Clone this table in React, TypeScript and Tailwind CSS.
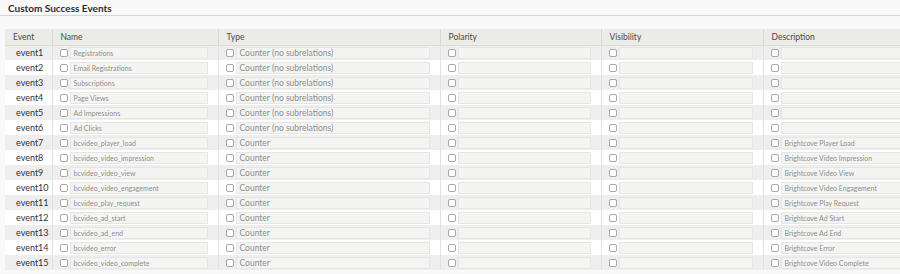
import React from 'react'

interface EventRow {
	id: string
	name: string
	type: string
	description: string
}

const rows: EventRow[] = [
	{ id: 'event1', name: 'Registrations', type: 'Counter (no subrelations)', description: '' },
	{ id: 'event2', name: 'Email Registrations', type: 'Counter (no subrelations)', description: '' },
	{ id: 'event3', name: 'Subscriptions', type: 'Counter (no subrelations)', description: '' },
	{ id: 'event4', name: 'Page Views', type: 'Counter (no subrelations)', description: '' },
	{ id: 'event5', name: 'Ad Impressions', type: 'Counter (no subrelations)', description: '' },
	{ id: 'event6', name: 'Ad Clicks', type: 'Counter (no subrelations)', description: '' },
	{ id: 'event7', name: 'bcvideo_player_load', type: 'Counter', description: 'Brightcove Player Load' },
	{ id: 'event8', name: 'bcvideo_video_impression', type: 'Counter', description: 'Brightcove Video Impression' },
	{ id: 'event9', name: 'bcvideo_video_view', type: 'Counter', description: 'Brightcove Video View' },
	{ id: 'event10', name: 'bcvideo_video_engagement', type: 'Counter', description: 'Brightcove Video Engagement' },
	{ id: 'event11', name: 'bcvideo_play_request', type: 'Counter', description: 'Brightcove Play Request' },
	{ id: 'event12', name: 'bcvideo_ad_start', type: 'Counter', description: 'Brightcove Ad Start' },
	{ id: 'event13', name: 'bcvideo_ad_end', type: 'Counter', description: 'Brightcove Ad End' },
	{ id: 'event14', name: 'bcvideo_error', type: 'Counter', description: 'Brightcove Error' },
	{ id: 'event15', name: 'bcvideo_video_complete', type: 'Counter', description: 'Brightcove Video Complete' },
]

const Box = () => (
	<span className="w-[8px] h-[8px] shrink-0 rounded-[2px] border border-[#a8a8a8] bg-white" />
)

interface FieldProps {
	text?: string
	big?: boolean
	last?: boolean
}

const Field = ({ text = '', big = false, last = false }: FieldProps) => (
	<div className={`flex items-center h-full pl-[7px] ${last ? 'pr-0' : 'pr-[10px]'}`}>
		<Box />
		<div
			className={`ml-[2px] flex-1 h-[12px] flex items-center px-[3px] pt-[1px] leading-none bg-[#f4f4f2] border border-[#e6e6e4] text-[#8e8e8e] whitespace-nowrap overflow-hidden ${
				big ? 'text-[8.5px]' : 'text-[7px]'
			}`}
		>
			{text}
		</div>
	</div>
)

const headers = ['Event', 'Name', 'Type', 'Polarity', 'Visibility', 'Description']
const widths = ['w-[47px]', 'w-[166px]', 'w-[222px]', 'w-[161px]', 'w-[162px]', 'w-[142px]']

const App = () => {
	return (
		<div className="w-[900px] h-[274px] overflow-hidden bg-[#f9f9f9] font-['Lato',sans-serif] text-[#333]">
			<div className="px-[8px] pt-[2px] h-[16px] border-b border-[#d6d6d6]">
				<h2 className="text-[10px] font-bold leading-[12px] text-[#2c2c2c]">Custom Success Events</h2>
			</div>
			<table className="ml-[5px] mt-[13px] border-collapse table-fixed w-[900px]">
				<colgroup>
					{widths.map((w, i) => (
						<col key={i} className={w} />
					))}
				</colgroup>
				<thead>
					<tr className="h-[16px] bg-[#ebebe7]">
						{headers.map((h, i) => (
							<th
								key={h}
								className={`text-left font-normal text-[8.5px] text-[#4a4a4a] leading-none pt-[1px] pl-[8px] pr-0 border-b border-[#dcdcd8] ${
									i > 0 ? 'border-l border-l-[#d8d8d4]' : ''
								}`}
							>
								{h}
							</th>
						))}
					</tr>
				</thead>
				<tbody>
					{rows.map((row, i) => (
						<tr
							key={row.id}
							className={`h-[15px] ${i % 2 === 0 ? 'bg-[#eeeeee]' : 'bg-white'}`}
						>
							<td className="pl-[11px] pr-0 py-0 text-[9px] leading-none text-[#333]">{row.id}</td>
							<td className="p-0 border-l border-[#e2e2e2]">
								<Field text={row.name} />
							</td>
							<td className="p-0 border-l border-[#e2e2e2]">
								<Field text={row.type} big />
							</td>
							<td className="p-0 border-l border-[#e2e2e2]">
								<Field />
							</td>
							<td className="p-0 border-l border-[#e2e2e2]">
								<Field />
							</td>
							<td className="p-0 border-l border-[#e2e2e2]">
								<Field text={row.description} last />
							</td>
						</tr>
					))}
				</tbody>
			</table>
		</div>
	)
}

export default App
